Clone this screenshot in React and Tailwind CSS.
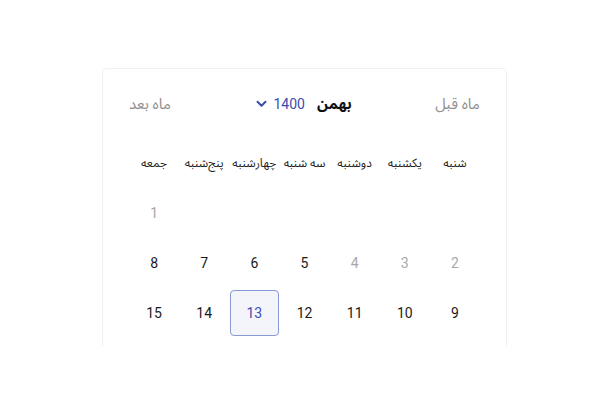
import React from "react";

const weekdays = ["شنبه", "یکشنبه", "دوشنبه", "سه شنبه", "چهارشنبه", "پنج‌شنبه", "جمعه"];

const rows = [
  [null, null, null, null, null, null, { d: 1, muted: true }],
  [{ d: 2, muted: true }, { d: 3, muted: true }, { d: 4, muted: true }, { d: 5 }, { d: 6 }, { d: 7 }, { d: 8 }],
  [{ d: 9 }, { d: 10 }, { d: 11 }, { d: 12 }, { d: 13, sel: true }, { d: 14 }, { d: 15 }],
];

export default function App() {
  return (
    <div
      className="w-[600px] h-[400px] bg-white overflow-hidden"
      style={{ fontFamily: 'Roboto, "Noto Sans Arabic", sans-serif' }}
    >
      <div
        dir="rtl"
        className="mt-[68px] ml-[102px] w-[405px] h-[278px] border border-b-0 border-[#f0f0f0] rounded-t-[5px] px-[26px]"
      >
        <div className="h-[70px] flex items-center justify-between">
          <span className="text-[15px] text-[#8f8f8f]">ماه قبل</span>
          <div className="flex items-center gap-[12px] ml-[2px]">
            <span className="text-[15px] font-bold text-[#111]">بهمن</span>
            <span className="flex items-center gap-[6px] text-[14px] text-[#3b4cb0]">
              <span>1400</span>
              <svg width="11" height="8" viewBox="0 0 11 8" fill="none">
                <path d="M1.5 1.8 L5.5 5.8 L9.5 1.8" stroke="#3b4cb0" strokeWidth="2" strokeLinecap="round" strokeLinejoin="round" />
              </svg>
            </span>
          </div>
          <span className="text-[15px] text-[#8f8f8f]">ماه بعد</span>
        </div>
        <div className="grid grid-cols-7 h-[48px] items-center">
          {weekdays.map((w) => (
            <div key={w} className="text-center text-[12px] text-[#222] whitespace-nowrap">
              {w}
            </div>
          ))}
        </div>
        <div className="mt-[1px]">
          {rows.map((r, i) => (
            <div key={i} className="grid grid-cols-7 h-[50px] items-center">
              {r.map((c, j) => (
                <div key={j} className="flex items-center justify-center">
                  {c && (
                    <div
                      className={
                        c.sel
                          ? "w-[49px] h-[46px] flex items-center justify-center rounded-[4px] border border-[#8a9ad6] bg-[#f4f4fb] text-[14px] text-[#3b4cb0]"
                          : c.muted
                          ? "w-[49px] h-[46px] flex items-center justify-center text-[14px] text-[#a8a8a8]"
                          : "w-[49px] h-[46px] flex items-center justify-center text-[14px] text-[#1a1a1a]"
                      }
                    >
                      {c.d}
                    </div>
                  )}
                </div>
              ))}
            </div>
          ))}
        </div>
      </div>
    </div>
  );
}
